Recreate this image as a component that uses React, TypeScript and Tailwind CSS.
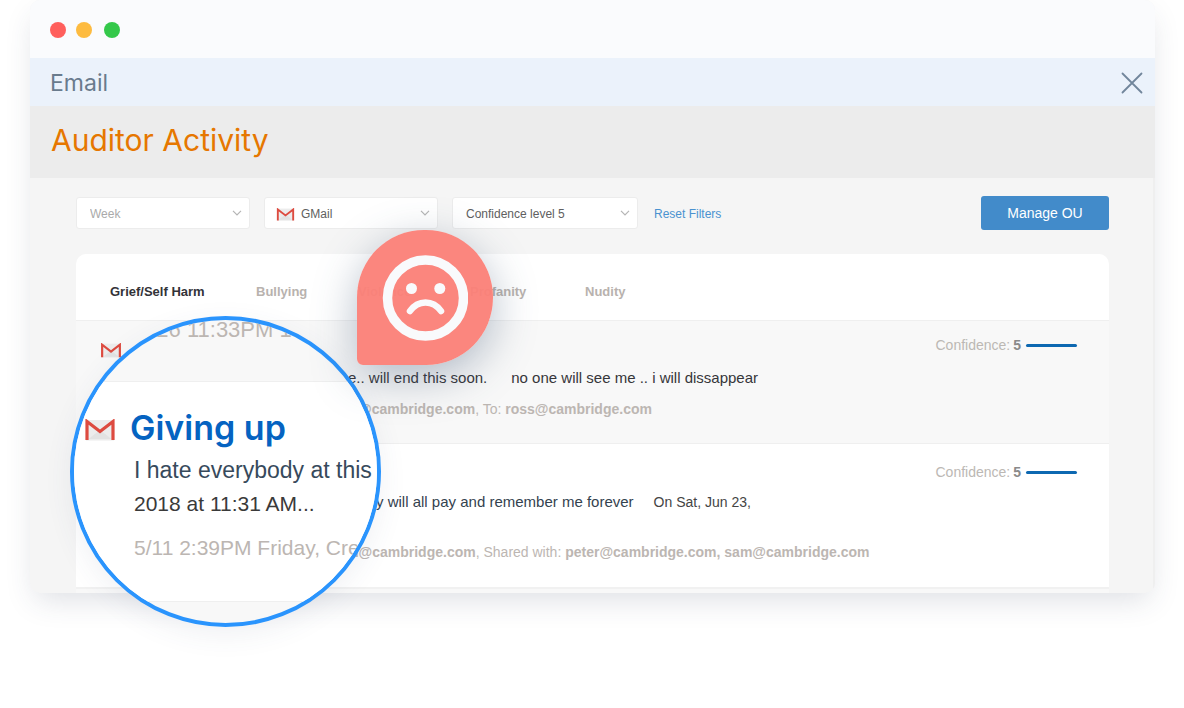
import type { ReactNode } from 'react';

const tabs = [
  { label: 'Grief/Self Harm', className: 'w-[146px] text-[#333338]' },
  { label: 'Bullying', className: 'w-[102px]' },
  { label: 'Violence', className: 'w-[112px]' },
  { label: 'Profanity', className: 'w-[115px]' },
  { label: 'Nudity', className: '' },
];

interface FilterProps {
  label: string;
  value: string;
  className: string;
  icon?: ReactNode;
}

function GmailIcon({ className }: { className: string }) {
  return (
    <svg viewBox="0 0 30 22" className={className} aria-hidden="true">
      <path d="M1 1h28v20.500H1z" fill="#ececec" />
      <path d="M3.500 20 15 11l11.500 9z" fill="#e2e2e2" />
      <path d="M2 21V2.500l13 10 13-10V21" fill="none" stroke="#dd4b40" strokeWidth="3.200" />
    </svg>
  );
}

function Filter({ label, value, className, icon }: FilterProps) {
  return (
    <div className="relative">
      {icon}
      <select
        aria-label={label}
        className={`h-8 appearance-none rounded-[3px] border border-[#ececec] bg-white pt-[2px] text-[12px] ${className}`}
      >
        <option>{value}</option>
      </select>
      <svg viewBox="0 0 10 6" className="pointer-events-none absolute right-2 top-[13px] h-[6px] w-[10px]" aria-hidden="true">
        <path d="m1 .8 4 4 4-4" fill="none" stroke="#b5b5b5" strokeWidth="1.200" />
      </svg>
    </div>
  );
}

function Confidence({ level }: { level: number }) {
  return (
    <div className="flex shrink-0 items-center text-[14px] leading-5 text-[#bcb8b4]">
      Confidence:<b className="ml-[3px] text-[#8a8a8a]">{level}</b>
      <span className="ml-[5px] h-[3px] w-[51px] rounded-full bg-[#0d68b1]" />
    </div>
  );
}

function SadFace() {
  return (
    <svg viewBox="0 0 86 86" className="h-[86px] w-[86px]" role="img" aria-label="Sad face">
      <circle cx="43.500" cy="43" r="38" fill="none" stroke="#f9fafc" strokeWidth="9.500" />
      <circle cx="29.500" cy="33.500" r="5.500" fill="#f9fafc" />
      <circle cx="57.800" cy="33.500" r="5.500" fill="#f9fafc" />
      <path d="M28 56c8-11.500 23-11.500 31 0" fill="none" stroke="#f9fafc" strokeWidth="6.500" strokeLinecap="round" />
    </svg>
  );
}

function Lens() {
  return (
    <div className="absolute left-[70px] top-[316px] h-[311px] w-[311px] overflow-hidden rounded-full border-4 border-[#2a94fd] bg-[#f8f8f8] shadow-[0_8px_28px_rgba(60,80,120,0.08)]">
      <div className="h-[62px] whitespace-nowrap border-b border-[#efefef] pl-16 text-[22px] leading-5 text-[#bcb6b2]">
        5/26 11:33PM 10
      </div>
      <div className="h-[220px] whitespace-nowrap border-b border-[#efefef] bg-white pt-[26px]">
        <div className="flex items-center pl-[10px]">
          <GmailIcon className="mt-1 h-[22px] w-[32px]" />
          <h2 className="pl-[14px] font-[Inter] text-[34px] font-semibold leading-10 text-[#0563c1]">Giving up</h2>
        </div>
        <div className="pl-[60px]">
          <p className="pt-[6px] text-[23px] leading-8 text-[#374a5c]">I hate everybody at this</p>
          <p className="pt-[2px] text-[21px] leading-8 text-[#3a3a3a]">2018 at 11:31 AM...</p>
          <p className="pt-3 text-[21px] leading-8 text-[#bcb6b2]">5/11 2:39PM Friday, Cre</p>
        </div>
      </div>
    </div>
  );
}

function Pin() {
  return (
    <div className="absolute left-[357px] top-[230px] flex h-[135px] w-[136px] items-center justify-center rounded-[67px] rounded-bl-[6px] bg-[#fb7f77]/95 shadow-[0_12px_44px_rgba(60,85,115,0.38)]">
      <SadFace />
    </div>
  );
}

export default function App() {
  return (
    <div className="relative overflow-hidden bg-white pb-[116px] pl-[30px] pr-[29px] font-['Liberation_Sans',Arial,sans-serif]">
      <div className="overflow-hidden rounded-[10px] bg-[#f5f5f5] shadow-[0_12px_30px_-6px_rgba(50,60,90,0.17)]">
        <div className="flex h-[58px] items-center bg-[#fafbfd] pl-5 pt-[2px]">
          <span className="h-4 w-4 rounded-full bg-[#ff5f5c]" />
          <span className="ml-[10px] h-4 w-4 rounded-full bg-[#fdbb40]" />
          <span className="ml-3 h-4 w-4 rounded-full bg-[#34c84a]" />
        </div>
        <div className="flex h-12 items-center justify-between bg-[#ebf2fb] pl-5 pr-3 pt-[2px]">
          <span className="font-[Inter] text-[23px] leading-8 text-[#697b8d]">Email</span>
          <button aria-label="Close">
            <svg viewBox="0 0 22 22" className="h-[22px] w-[22px]">
              <path d="m1.500 1.500 19 19m0-19-19 19" stroke="#71869b" strokeWidth="1.800" strokeLinecap="round" />
            </svg>
          </button>
        </div>
        <h1 className="h-[72px] bg-[#ececec] pl-[21px] pt-[14px] font-[Inter] text-[30px] leading-10 text-[#e67700]">
          Auditor Activity
        </h1>

        <div className="border-r-2 border-[#efefef] pl-[46px] pr-11 pt-[18px]">
          <div className="flex h-[34px] items-center">
            <Filter label="Period" value="Week" className="w-[174px] pl-[13px] text-[#aaaaaa]" />
            <div className="ml-[14px]">
              <Filter
                label="Source"
                value="GMail"
                className="w-[174px] pl-9 text-[#606060]"
                icon={<GmailIcon className="pointer-events-none absolute left-3 top-[11px] h-[13px] w-[19px]" />}
              />
            </div>
            <div className="ml-[14px]">
              <Filter label="Confidence" value="Confidence level 5" className="w-[186px] pl-[13px] text-[#606060]" />
            </div>
            <button className="ml-4 pt-[2px] text-[12px] text-[#4a92d0]">Reset Filters</button>
            <button className="ml-auto h-[34px] w-32 rounded-[3px] bg-[#428bca] text-[14px] text-white">
              Manage OU
            </button>
          </div>

          <div className="mt-6 rounded-t-[10px] bg-white">
            <div className="flex h-[67px] items-center border-b border-[#efefef] pl-[34px] pt-[9px] text-[13px] font-bold text-[#b8b2ae]">
              {tabs.map(({ label, className }) => (
                <button key={label} className={`text-left ${className}`}>
                  {label}
                </button>
              ))}
            </div>
            <div className="flex h-[123px] items-start border-b border-[#efefef] bg-[#f8f8f8] pl-6 pr-8 pt-[14px]">
              <GmailIcon className="mt-2 h-[15px] w-[22px] shrink-0" />
              <div className="grow whitespace-nowrap pt-8">
                <p className="pl-[226px] text-[15px] leading-[22px] text-[#36363a]">
                  e.. will end this soon.<span className="ml-6">no one will see me .. i will dissappear</span>
                </p>
                <p className="mt-[10px] pl-[236px] text-[14px] leading-5 text-[#bcb6b2]">
                  <b>@cambridge.com</b>, To: <b>ross@cambridge.com</b>
                </p>
              </div>
              <Confidence level={5} />
            </div>
            <div className="flex h-[143px] items-start pl-6 pr-8 pt-[18px]">
              <GmailIcon className="mt-2 h-[15px] w-[22px] shrink-0" />
              <div className="grow whitespace-nowrap pt-[29px]">
                <p className="pl-[254px] text-[15px] leading-[22px] text-[#34424f]">
                  y will all pay and remember me forever
                  <span className="ml-5 text-[14px] text-[#444444]">On Sat, Jun 23,</span>
                </p>
                <p className="mt-[29px] pl-[228px] text-[14px] leading-5 text-[#bcb6b2]">
                  <b>n@cambridge.com</b>, Shared with: <b>peter@cambridge.com, sam@cambridge.com</b>
                </p>
              </div>
              <Confidence level={5} />
            </div>
            <div className="h-[6px] border-t-2 border-[#f1f1f1] bg-[#f8f8f8]" />
          </div>
        </div>
      </div>

      <Lens />
      <Pin />
    </div>
  );
}
